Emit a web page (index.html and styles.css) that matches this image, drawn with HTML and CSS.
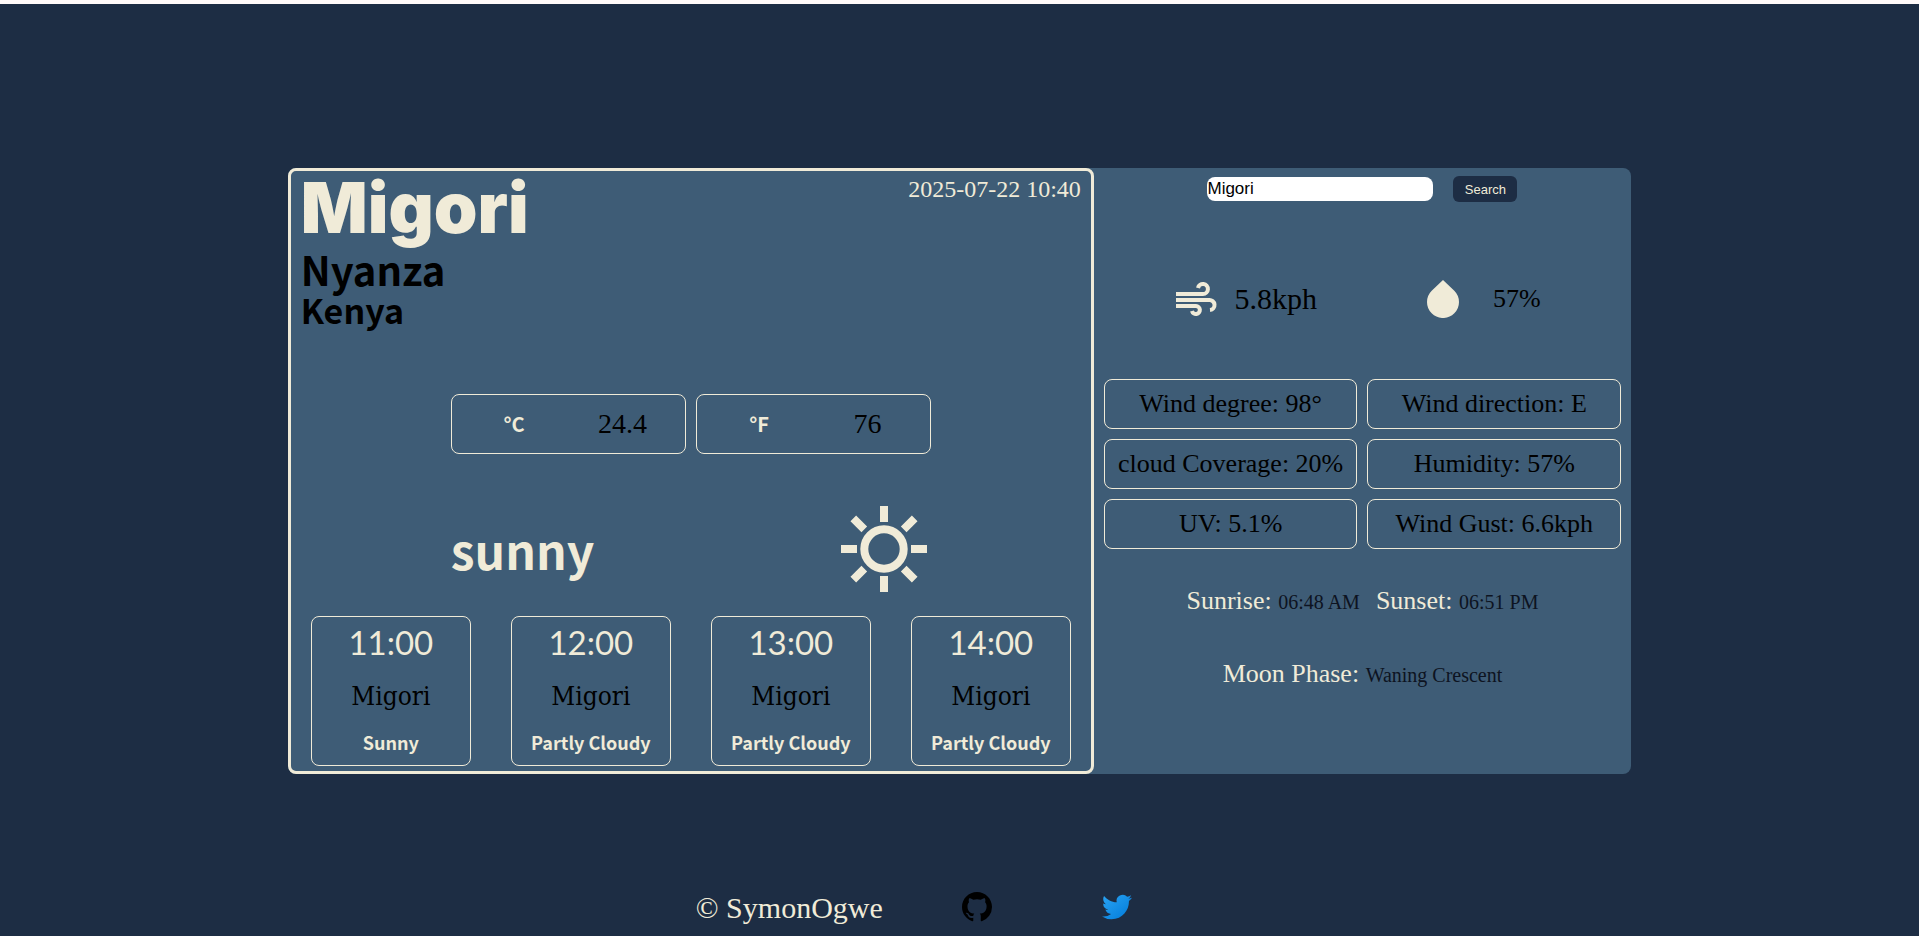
FILE: index.html
```html
<!DOCTYPE html>
<html lang="en">
<head>
<meta charset="utf-8">
<title>Weather</title>
<link rel="stylesheet" href="styles.css">
</head>
<body>
<main class="page">
  <div class="card">
    <section class="current">
      <header class="place">
        <div>
          <h1 class="city">Migori</h1>
          <h2 class="region">Nyanza</h2>
          <h3 class="country">Kenya</h3>
        </div>
        <time class="date">2025-07-22 10:40</time>
      </header>
      <div class="temps">
        <div class="temp"><span class="unit">°C</span><span>24.4</span></div>
        <div class="temp"><span class="unit">°F</span><span>76</span></div>
      </div>
      <div class="condition">
        <h2 class="condition-name">sunny</h2>
        <svg class="sun" viewBox="-43 -43 86 86" fill="none" stroke="currentColor" stroke-width="8" aria-hidden="true">
          <circle r="19.7"/>
          <path d="M0-43V-27M0 27V43M-43 0H-27M27 0H43M19.7-19.7L30.7-30.7M19.7 19.7L30.7 30.7M-19.7 19.7L-30.7 30.7M-19.7-19.7L-30.7-30.7"/>
        </svg>
      </div>
      <div class="hours">
        <article class="hour"><p class="hour-time">11:00</p><p class="hour-city">Migori</p><p class="hour-text">Sunny</p></article>
        <article class="hour"><p class="hour-time">12:00</p><p class="hour-city">Migori</p><p class="hour-text">Partly Cloudy</p></article>
        <article class="hour"><p class="hour-time">13:00</p><p class="hour-city">Migori</p><p class="hour-text">Partly Cloudy</p></article>
        <article class="hour"><p class="hour-time">14:00</p><p class="hour-city">Migori</p><p class="hour-text">Partly Cloudy</p></article>
      </div>
    </section>
    <section class="details">
      <form class="search">
        <input class="search-input" type="text" value="Migori" aria-label="City">
        <button class="search-button" type="button">Search</button>
      </form>
      <div class="metrics">
        <div class="metric metric-wind">
          <svg class="wind" viewBox="0 0 42 36" fill="none" stroke="currentColor" stroke-width="4" aria-hidden="true">
            <path d="M0 13H27a5 5 0 1 0-5-6M0 19H33a5 5 0 0 1 1 10M0 25H20a4 4 0 1 1-4 5"/>
          </svg>
          <span>5.8kph</span>
        </div>
        <div class="metric metric-rain">
          <svg class="drop" viewBox="0 0 32 38" fill="currentColor" aria-hidden="true">
            <path d="M16 0L27.3 10.7A16 16 0 1 1 4.7 10.7Z"/>
          </svg>
          <span>57%</span>
        </div>
      </div>
      <div class="facts">
        <p class="fact">Wind degree: 98°</p>
        <p class="fact">Wind direction: E</p>
        <p class="fact">cloud Coverage: 20%</p>
        <p class="fact">Humidity: 57%</p>
        <p class="fact">UV: 5.1%</p>
        <p class="fact">Wind Gust: 6.6kph</p>
      </div>
      <div class="astro">
        <p>Sunrise: <span class="astro-value">06:48 AM</span></p>
        <p>Sunset: <span class="astro-value">06:51 PM</span></p>
      </div>
      <div class="astro">
        <p>Moon Phase: <span class="astro-value">Waning Crescent</span></p>
      </div>
    </section>
  </div>
</main>
<footer class="footer">
  <p class="owner">© SymonOgwe</p>
  <a class="social github" href="#" aria-label="GitHub">
    <svg class="social-icon" viewBox="0 0 16 16" fill="currentColor" aria-hidden="true"><path d="M8 0C3.58 0 0 3.58 0 8c0 3.54 2.29 6.53 5.47 7.59.4.07.55-.17.55-.38 0-.19-.01-.82-.01-1.49-2.01.37-2.53-.49-2.69-.94-.09-.23-.48-.94-.82-1.13-.28-.15-.68-.52-.01-.53.63-.01 1.08.58 1.23.82.72 1.21 1.87.87 2.33.66.07-.52.28-.87.51-1.07-1.78-.2-3.64-.89-3.64-3.95 0-.87.31-1.59.82-2.15-.08-.2-.36-1.02.08-2.12 0 0 .67-.21 2.2.82.64-.18 1.32-.27 2-.27s1.36.09 2 .27c1.53-1.04 2.2-.82 2.2-.82.44 1.1.16 1.92.08 2.12.51.56.82 1.27.82 2.15 0 3.07-1.87 3.75-3.65 3.95.29.25.54.73.54 1.48 0 1.07-.01 1.93-.01 2.2 0 .21.15.46.55.38A8 8 0 0 0 16 8c0-4.42-3.58-8-8-8z"/></svg>
  </a>
  <a class="social twitter" href="#" aria-label="Twitter">
    <svg class="social-icon" viewBox="0 0 24 24" aria-hidden="true">
      <defs><linearGradient id="bird" x1="0" y1="0" x2="1" y2="1"><stop offset="0" stop-color="#2aa4f4"/><stop offset="1" stop-color="#007ad9"/></linearGradient></defs>
      <path fill="url(#bird)" d="M23.953 4.57a10 10 0 0 1-2.825.775 4.958 4.958 0 0 0 2.163-2.723c-.951.555-2.005.959-3.127 1.184a4.92 4.92 0 0 0-8.384 4.482C7.69 8.095 4.067 6.13 1.64 3.162a4.822 4.822 0 0 0-.666 2.475c0 1.71.87 3.213 2.188 4.096a4.904 4.904 0 0 1-2.228-.616v.06a4.923 4.923 0 0 0 3.946 4.827 4.996 4.996 0 0 1-2.212.085 4.936 4.936 0 0 0 4.604 3.417 9.867 9.867 0 0 1-6.102 2.105c-.39 0-.779-.023-1.17-.067a13.995 13.995 0 0 0 7.557 2.209c9.053 0 13.998-7.496 13.998-13.985 0-.21 0-.42-.015-.63A9.935 9.935 0 0 0 24 4.59z"/>
    </svg>
  </a>
</footer>
</body>
</html>
```
FILE: styles.css
```css
:root {
  --navy: #1d2d44;
  --slate: #3e5c76;
  --cream: #f0ebd8;
  --ink: #0d1321;
  --serif: "Liberation Serif", serif;
  --humanist: "Noto Sans CJK SC", sans-serif;
}

* { box-sizing: border-box; margin: 0; padding: 0; }

body {
  display: flex;
  flex-direction: column;
  min-height: 100vh;
  border-top: 4px solid #fffafa;
  background: var(--navy);
  color: #000;
  font-family: var(--serif);
}

.page {
  flex: 1;
  display: flex;
  align-items: center;
  justify-content: center;
  padding-top: 60px;
}

.card {
  display: grid;
  grid-template-columns: 3fr 2fr;
  width: 70%;
  border-radius: 8px;
  background: var(--slate);
}

.current {
  display: flex;
  flex-direction: column;
  min-width: 0;
  border: 3px solid var(--cream);
  border-radius: 8px;
  padding-bottom: 5px;
}

.place {
  display: flex;
  justify-content: space-between;
  padding: 2px 10px 0;
}

.city {
  margin-bottom: 4px;
  color: var(--cream);
  font: 900 70px/70px Inter, sans-serif;
}

.region { font: 700 40px/44px var(--humanist); }

.country { font: 700 34px/38px var(--humanist); }

.date {
  padding-top: 2px;
  color: var(--cream);
  font-size: 24px;
  line-height: 28px;
}

.temps {
  display: grid;
  grid-template-columns: 1fr 1fr;
  gap: 10px;
  width: 60%;
  margin: 65px auto 0;
}

.temp {
  display: grid;
  grid-template-columns: 1fr 1fr;
  align-items: center;
  justify-items: center;
  height: 60px;
  padding: 0 8px;
  border: 1px solid var(--cream);
  border-radius: 8px;
  font-size: 28px;
}

.unit {
  color: var(--cream);
  font: 700 20px/28px var(--humanist);
}

.condition {
  display: flex;
  align-items: center;
  justify-content: space-between;
  width: 60%;
  margin: 52px auto 0;
  padding-right: 4px;
}

.condition-name {
  color: var(--cream);
  font: 700 48px/60px var(--humanist);
}

.sun {
  width: 86px;
  height: 86px;
  color: var(--cream);
}

.hours {
  display: grid;
  grid-template-columns: repeat(4, 1fr);
  gap: 40px;
  margin-top: 24px;
  padding: 0 20px;
}

.hour {
  display: flex;
  flex-direction: column;
  align-items: center;
  height: 150px;
  padding-top: 5px;
  border: 1px solid var(--cream);
  border-radius: 8px;
}

.hour-time {
  color: var(--cream);
  font: 400 33px/40px Lato, sans-serif;
}

.hour-city {
  margin-top: 16px;
  font: 400 26px/36px "DejaVu Serif Condensed", "DejaVu Serif", serif;
}

.hour-text {
  margin-top: 16px;
  color: var(--cream);
  font: 700 18px/24px var(--humanist);
}

.details {
  display: flex;
  flex-direction: column;
  min-width: 0;
  padding: 8px 10px;
}

.search {
  display: flex;
  align-items: center;
  justify-content: center;
  gap: 20px;
}

.search-input {
  width: 226px;
  height: 24px;
  border: 0;
  border-radius: 8px;
  background: #fff;
  color: #000;
  font: 17px "Liberation Sans", sans-serif;
}

.search-button {
  width: 64px;
  height: 26px;
  border: 0;
  border-radius: 6px;
  background: var(--navy);
  color: var(--cream);
  font: 13px "Liberation Sans", sans-serif;
}

.metrics {
  display: flex;
  justify-content: center;
  gap: 110px;
  margin-top: 78px;
  padding-right: 8px;
  font-size: 30px;
}

.metric {
  display: flex;
  align-items: center;
}

.metric-wind { gap: 16px; }

.metric-rain {
  gap: 34px;
  font-size: 26px;
}

.wind {
  width: 42px;
  height: 36px;
  color: var(--cream);
}

.drop {
  width: 32px;
  height: 38px;
  color: var(--cream);
}

.facts {
  display: grid;
  grid-template-columns: 1fr 1fr;
  gap: 10px;
  margin: 61px 0 16px;
}

.fact {
  height: 50px;
  border: 1px solid var(--cream);
  border-radius: 8px;
  font-size: 26px;
  line-height: 47px;
  text-align: center;
}

.astro {
  display: flex;
  justify-content: center;
  gap: 16px;
  margin: 16px 0;
  color: var(--cream);
  font-size: 26px;
  line-height: 40px;
}

.astro-value {
  color: var(--ink);
  font-size: 20px;
}

.footer {
  display: flex;
  align-items: center;
  height: 58px;
  padding-left: 36%;
}

.owner {
  margin: 2px 24px 0 5px;
  color: var(--cream);
  font-size: 30px;
}

.social {
  display: flex;
  justify-content: center;
  width: 140px;
}

.social-icon { width: 30px; height: 30px; }

.github { color: #000; }
```
